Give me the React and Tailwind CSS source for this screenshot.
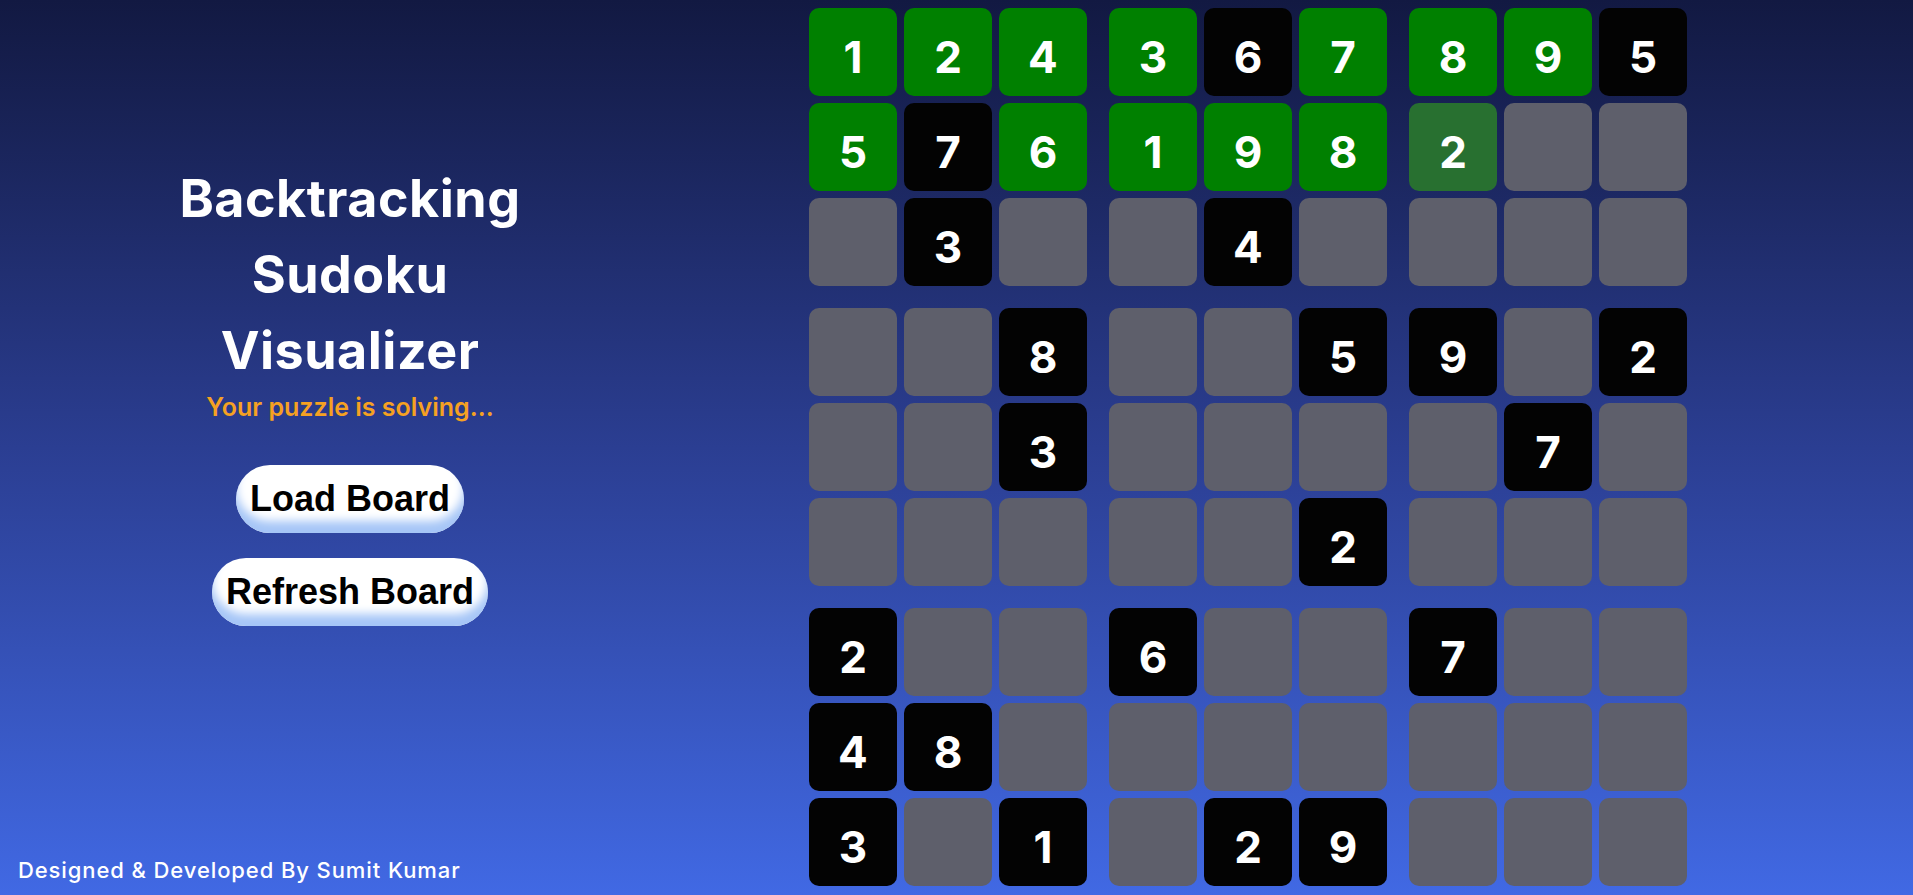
import React from "react";

const G = "g", B = "b", D = "d", E = "e";
const board = [
  [[1,G],[2,G],[4,G],[3,G],[6,B],[7,G],[8,G],[9,G],[5,B]],
  [[5,G],[7,B],[6,G],[1,G],[9,G],[8,G],[2,D],[0,E],[0,E]],
  [[0,E],[3,B],[0,E],[0,E],[4,B],[0,E],[0,E],[0,E],[0,E]],
  [[0,E],[0,E],[8,B],[0,E],[0,E],[5,B],[9,B],[0,E],[2,B]],
  [[0,E],[0,E],[3,B],[0,E],[0,E],[0,E],[0,E],[7,B],[0,E]],
  [[0,E],[0,E],[0,E],[0,E],[0,E],[2,B],[0,E],[0,E],[0,E]],
  [[2,B],[0,E],[0,E],[6,B],[0,E],[0,E],[7,B],[0,E],[0,E]],
  [[4,B],[8,B],[0,E],[0,E],[0,E],[0,E],[0,E],[0,E],[0,E]],
  [[3,B],[0,E],[1,B],[0,E],[2,B],[9,B],[0,E],[0,E],[0,E]],
];

const bg = {
  g: "bg-[#008000]",
  b: "bg-[#030303]",
  d: "bg-[#287030]",
  e: "bg-[#5e5f6b]",
};

function Cell({ v, t }) {
  return (
    <div
      className={`w-[88px] h-[88px] rounded-[10px] flex items-center justify-center pt-[10px] text-white text-[44px] font-bold ${bg[t]}`}
    >
      {v ? v : ""}
    </div>
  );
}

function Block({ br, bc }) {
  const cells = [];
  for (let r = 0; r < 3; r++) {
    for (let c = 0; c < 3; c++) {
      const [v, t] = board[br * 3 + r][bc * 3 + c];
      cells.push(<Cell key={`${r}-${c}`} v={v} t={t} />);
    }
  }
  return <div className="grid grid-cols-3 gap-[7px]">{cells}</div>;
}

export default function App() {
  const blocks = [];
  for (let br = 0; br < 3; br++)
    for (let bc = 0; bc < 3; bc++) blocks.push(<Block key={`${br}${bc}`} br={br} bc={bc} />);

  return (
    <div
      className="w-full h-[895px] flex bg-gradient-to-b from-[#121942] via-[#2b3e92] to-[#4169e4] overflow-hidden"
      style={{ fontFamily: "Inter, 'Noto Sans', sans-serif" }}
    >
      <div className="w-[700px] shrink-0 flex flex-col items-center">
        <h1 className="mt-[161px] text-white font-bold text-[52px] leading-[76px] text-center tracking-[0.5px]">
          Backtracking
          <br />
          Sudoku
          <br />
          Visualizer
        </h1>
        <p className="text-[#f5a122] font-semibold text-[25px] leading-[36px]">
          Your puzzle is solving...
        </p>
        <button
          className="mt-[40px] h-[68px] px-[14px] rounded-full bg-white text-black font-bold text-[36px] shadow-[inset_0_-12px_10px_#a6c6f7]"
          style={{ fontFamily: "'Liberation Sans', Arial, sans-serif" }}
        >
          Load Board
        </button>
        <button
          className="mt-[25px] h-[68px] px-[14px] rounded-full bg-white text-black font-bold text-[36px] shadow-[inset_0_-12px_10px_#a6c6f7]"
          style={{ fontFamily: "'Liberation Sans', Arial, sans-serif" }}
        >
          Refresh Board
        </button>
        <div className="mt-auto self-start pl-[18px] pb-[11px] text-white font-medium text-[22px] leading-[28px] tracking-[0.9px]">
          Designed &amp; Developed By Sumit Kumar
        </div>
      </div>
      <div className="ml-[109px] mt-[8px] grid grid-cols-3 gap-[22px] self-start">{blocks}</div>
    </div>
  );
}
